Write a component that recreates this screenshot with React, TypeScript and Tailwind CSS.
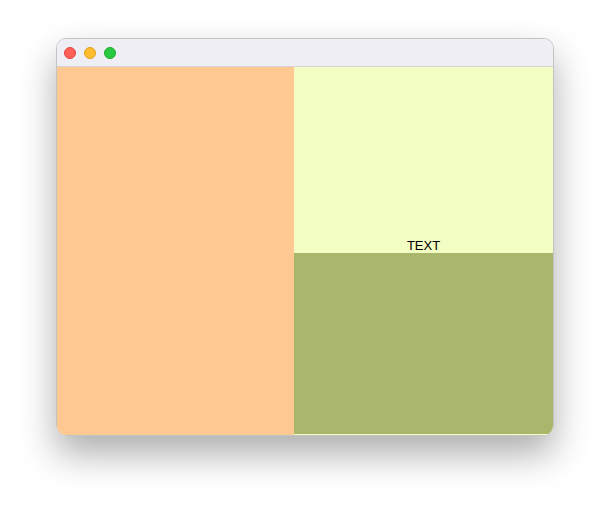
export default function App() {
  return (
    <div className="w-[609px] h-[509px] bg-white pl-[56px] pt-[38px]" style={{ fontFamily: '"Liberation Sans", Arial, sans-serif' }}>
      <div className="w-[498px] h-[398px] flex flex-col rounded-[10px] border border-[#c4c4c4] overflow-hidden shadow-[0_18px_36px_rgba(0,0,0,0.32)]">
        {/* title bar */}
        <div className="h-[28px] shrink-0 flex items-center gap-[8px] pl-[7px] bg-[#f0eef5] border-b border-[#d6d4d9]">
          <span className="w-[12px] h-[12px] rounded-full bg-[#fe5f57] border border-[#e2463f]" />
          <span className="w-[12px] h-[12px] rounded-full bg-[#febc2e] border border-[#e1a116]" />
          <span className="w-[12px] h-[12px] rounded-full bg-[#28c840] border border-[#1aab29]" />
        </div>
        {/* content */}
        <div className="flex flex-1 min-h-0">
          <div className="w-[237px] bg-[#fec893]" />
          <div className="flex-1 flex flex-col bg-[#f2fdc3]">
            <div className="h-[186px] flex items-end justify-center">
              <span className="text-[13px] leading-[15px] text-black">TEXT</span>
            </div>
            <div className="flex-1 bg-[#abb66d] mb-px" />
          </div>
        </div>
      </div>
    </div>
  )
}
